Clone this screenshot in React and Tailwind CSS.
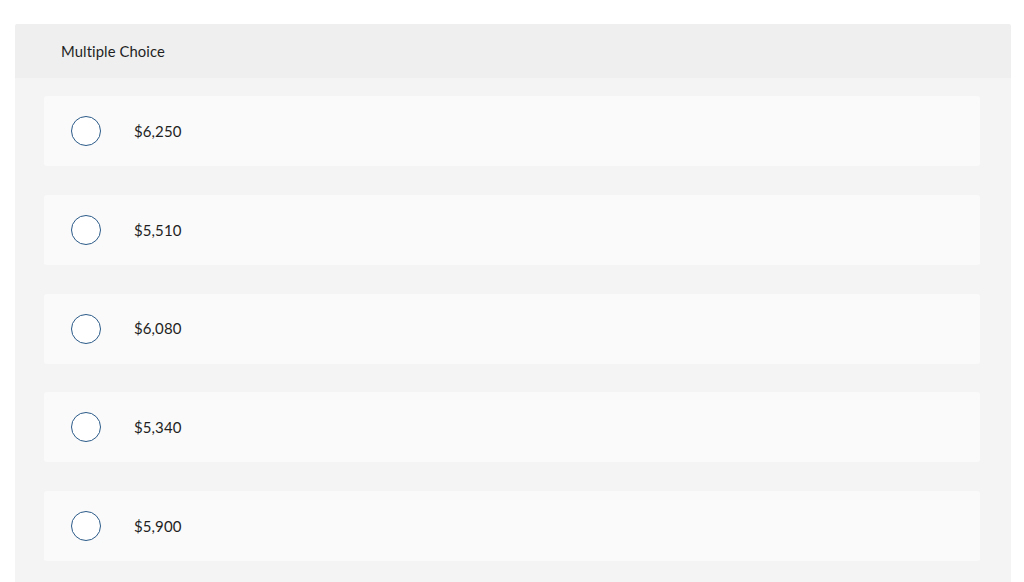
import React from "react";

const options = ["$6,250", "$5,510", "$6,080", "$5,340", "$5,900"];

export default function App() {
  return (
    <div className="w-[1024px] h-[582px] bg-white overflow-hidden pt-[24px] pl-[15px]" style={{ fontFamily: "Lato, 'Open Sans', sans-serif" }}>
      <div className="w-[996px] rounded-t-[2px] overflow-hidden">
        <div className="h-[54px] bg-[#efefef] flex items-center pl-[46px]">
          <span className="text-[14.8px] text-[#1f1f1f] tracking-[0.1px]">Multiple Choice</span>
        </div>
        <div className="bg-[#f4f4f4] pt-[18px] pl-[29px] pr-[31px] pb-[40px] flex flex-col gap-[28.75px]">
          {options.map((o) => (
            <div key={o} className="h-[70px] bg-[#fafafa] rounded-[3px] flex items-center pl-[27px]">
              <div className="w-[30px] h-[30px] rounded-full border-[1.5px] border-[#2b5a88] bg-white shrink-0" />
              <span className="ml-[33px] text-[15px] text-[#1f1f1f] tracking-[0.1px]">{o}</span>
            </div>
          ))}
        </div>
      </div>
    </div>
  );
}
